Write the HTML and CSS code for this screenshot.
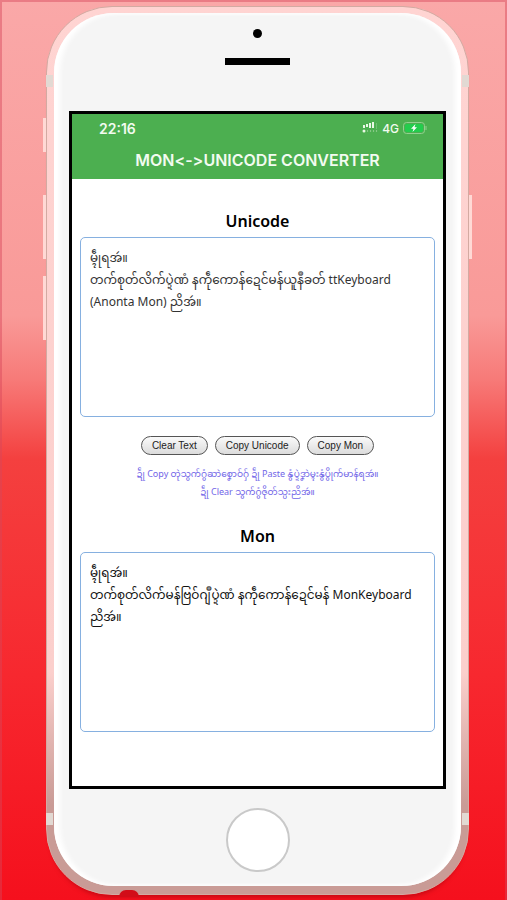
FILE: index.html
```
<!DOCTYPE html>
<html lang="mnw">
<head>
	<meta charset="UTF-8">
	<meta name="viewport" content="width=device-width, initial-scale=1.0">
	<title>Mon Unicode Converter</title>
	<link rel="stylesheet" href="styles.css">
</head>
<body>
	<div class="phone">
		<span class="band band-top"></span>
		<span class="band band-bottom"></span>
		<span class="key key-mute"></span>
		<span class="key key-up"></span>
		<span class="key key-down"></span>
		<span class="key key-power"></span>
		<span class="jack"></span>
		<div class="face">
			<div class="earpiece">
				<span class="camera"></span>
				<span class="speaker"></span>
			</div>
			<div class="screen">
				<header class="header">
					<div class="status">
						<span class="time">22:16</span>
						<svg class="signal" width="16" height="12" viewBox="0 0 16 12">
							<g fill="#e9f8e5">
								<rect x="1" y="3" width="2" height="3"/>
								<rect x="4" y="2" width="2" height="3"/>
								<rect x="7" y="1" width="2" height="5"/>
								<rect x="10" y="0" width="2" height="6"/>
								<circle cx="2" cy="9" r="1.500"/>
							</g>
							<g fill="#a7d8a5">
								<rect x="14" y="1" width="1" height="6" opacity=".4"/>
								<circle cx="5.500" cy="9" r=".7"/>
								<circle cx="8.500" cy="9" r=".7"/>
								<circle cx="11.500" cy="9" r=".7"/>
								<circle cx="14.500" cy="9" r=".7"/>
							</g>
						</svg>
						<span class="network">4G</span>
						<svg class="battery" width="24" height="12" viewBox="0 0 24 12">
							<rect x=".5" y=".5" width="21" height="11" rx="3" fill="none" stroke="#92d08f"/>
							<rect x="2" y="2" width="18" height="8" rx="2" fill="#23cd4d"/>
							<path d="M12.500 2 L8 6.700 H10.500 L9.500 10 L14 5.300 H11.500 Z" fill="#fff"/>
							<path d="M23 4 V8" stroke="#92d08f"/>
						</svg>
					</div>
					<h1>MON&lt;-&gt;UNICODE CONVERTER</h1>
				</header>
				<main>
					<label for="unicode">Unicode</label>
					<textarea id="unicode" spellcheck="false">မ္ၚဵုရအဴ။
တက်စုတ်လိက်ပ္ဍဲဏံ နကဵုကောန်ဍေၚ်မန်ယူနဳခတ် ttKeyboard (Anonta Mon) ညိအဴ။</textarea>
					<div class="buttons">
						<button type="button">Clear Text</button>
						<button type="button">Copy Unicode</button>
						<button type="button">Copy Mon</button>
					</div>
					<p class="hint">ဍဵု Copy တုဲသွက်ဂွံဆာဲစၞောဝ်ဂှ် ဍဵု Paste နွံပ္ဍဲဒၞာဲမ္ၚးနွံပွိုက်မာန်ရအဴ။<br>ဍဵု Clear သွက်ဂွံဇိုတ်သ္ပးညိအဴ။</p>
					<label for="mon">Mon</label>
					<textarea id="mon" class="mon" spellcheck="false">မ္ၚဵုရအဴ။
တက်စုတ်လိက်မန်ဗြဝ်ဂျဳပ္ဍဲဏံ နကဵုကောန်ဍေၚ်မန် MonKeyboard ညိအဴ။</textarea>
				</main>
			</div>
			<button type="button" class="home" aria-label="Home"></button>
		</div>
	</div>
</body>
</html>
```
FILE: styles.css
```
* {
	box-sizing: border-box;
}
body {
	margin: 0;
	min-height: 100vh;
	padding: 4px 36px 5px 44px;
	border: solid rgba(215, 70, 90, 0.45);
	border-width: 2px 2px 0;
	background: linear-gradient(#faa8a8, #f99a98 35%, #f77b79 42%, #f4403f 51%, #f7282f 75%, #f5101d);
	font-family: "Noto Sans", "Noto Sans Myanmar", sans-serif;
}
.phone {
	position: relative;
	padding: 6px 7px 8px;
	border: 1px solid #d3aaa2;
	border-radius: 66px;
	background: linear-gradient(#ffd4d2, #fbcfcc 75%, #c99b96 90%);
	box-shadow: 0 6px 4px -4px rgba(150, 0, 10, 0.5);
}
.face {
	display: flex;
	flex-direction: column;
	align-items: center;
	padding: 16px 15px 14px;
	border-radius: 60px;
	background: #f5f5f5;
	box-shadow: inset 6px 0 5px #fff, inset -6px 0 5px #fff;
}
.earpiece {
	display: flex;
	flex-direction: column;
	align-items: center;
	gap: 20px;
	height: 82px;
}
.camera {
	width: 9px;
	height: 9px;
	border-radius: 50%;
	background: #000;
}
.speaker {
	width: 65px;
	height: 7px;
	background: #000;
}
.screen {
	width: 100%;
	border: 3px solid #000;
	background: #fff;
}
.header {
	height: 65px;
	padding: 4px 16px 0;
	background: #4caf50;
	color: #f2fbf0;
	font-family: Inter, sans-serif;
}
.status {
	display: flex;
	align-items: center;
	gap: 4px;
	height: 20px;
	padding-left: 11px;
}
.time {
	margin-right: auto;
	font-size: 14px;
	font-weight: 600;
}
.network {
	font-size: 12px;
	font-weight: 500;
}
h1 {
	margin: 0;
	padding-top: 10px;
	font-size: 16px;
	font-weight: 600;
	line-height: 24px;
	text-align: center;
	white-space: nowrap;
	font-variant-ligatures: none;
	font-feature-settings: "calt" 0;
}
main {
	padding: 28px 8px 54px;
}
label {
	display: block;
	height: 30px;
	font-size: 16px;
	font-weight: 600;
	line-height: 28px;
	text-align: center;
}
textarea {
	display: block;
	width: 100%;
	height: 180px;
	padding: 9px;
	border: 1px solid #86b0e0;
	border-radius: 5px;
	background: #fff;
	color: #333;
	font-family: inherit;
	font-size: 12px;
	line-height: 22px;
	resize: none;
	outline: none;
}
.mon {
	color: #111;
}
.buttons {
	display: flex;
	justify-content: center;
	gap: 7px;
	padding-top: 19px;
}
.buttons button {
	height: 19px;
	padding: 0 10px;
	border: 1px solid #555;
	border-radius: 10px;
	background: linear-gradient(#fafafa, #dcdcdc);
	color: #222;
	font-family: "Liberation Sans", sans-serif;
	font-size: 10px;
}
.hint {
	height: 57px;
	margin: 10px 0 0;
	color: #7166e8;
	font-size: 9px;
	line-height: 18px;
	text-align: center;
}
.home {
	width: 64px;
	height: 64px;
	margin-top: 19px;
	border: 2px solid #c9c9c9;
	border-radius: 50%;
	background: #fff;
}
.band, .key, .jack {
	position: absolute;
}
.band {
	left: -1px;
	right: -1px;
	height: 12px;
	border: solid #e2d9d3;
	border-width: 0 7px;
}
.band-top {
	top: 68px;
}
.band-bottom {
	bottom: 69px;
}
.key {
	left: -4px;
	width: 3px;
	height: 64px;
	background: #ffd9d5;
}
.key-mute {
	top: 111px;
	height: 34px;
}
.key-up {
	top: 188px;
}
.key-down {
	top: 269px;
}
.key-power {
	top: 188px;
	right: -4px;
	left: auto;
}
.jack {
	left: 72px;
	bottom: -3px;
	width: 20px;
	height: 7px;
	border-radius: 10px 10px 0 0;
	background: #d20d18;
}
```
